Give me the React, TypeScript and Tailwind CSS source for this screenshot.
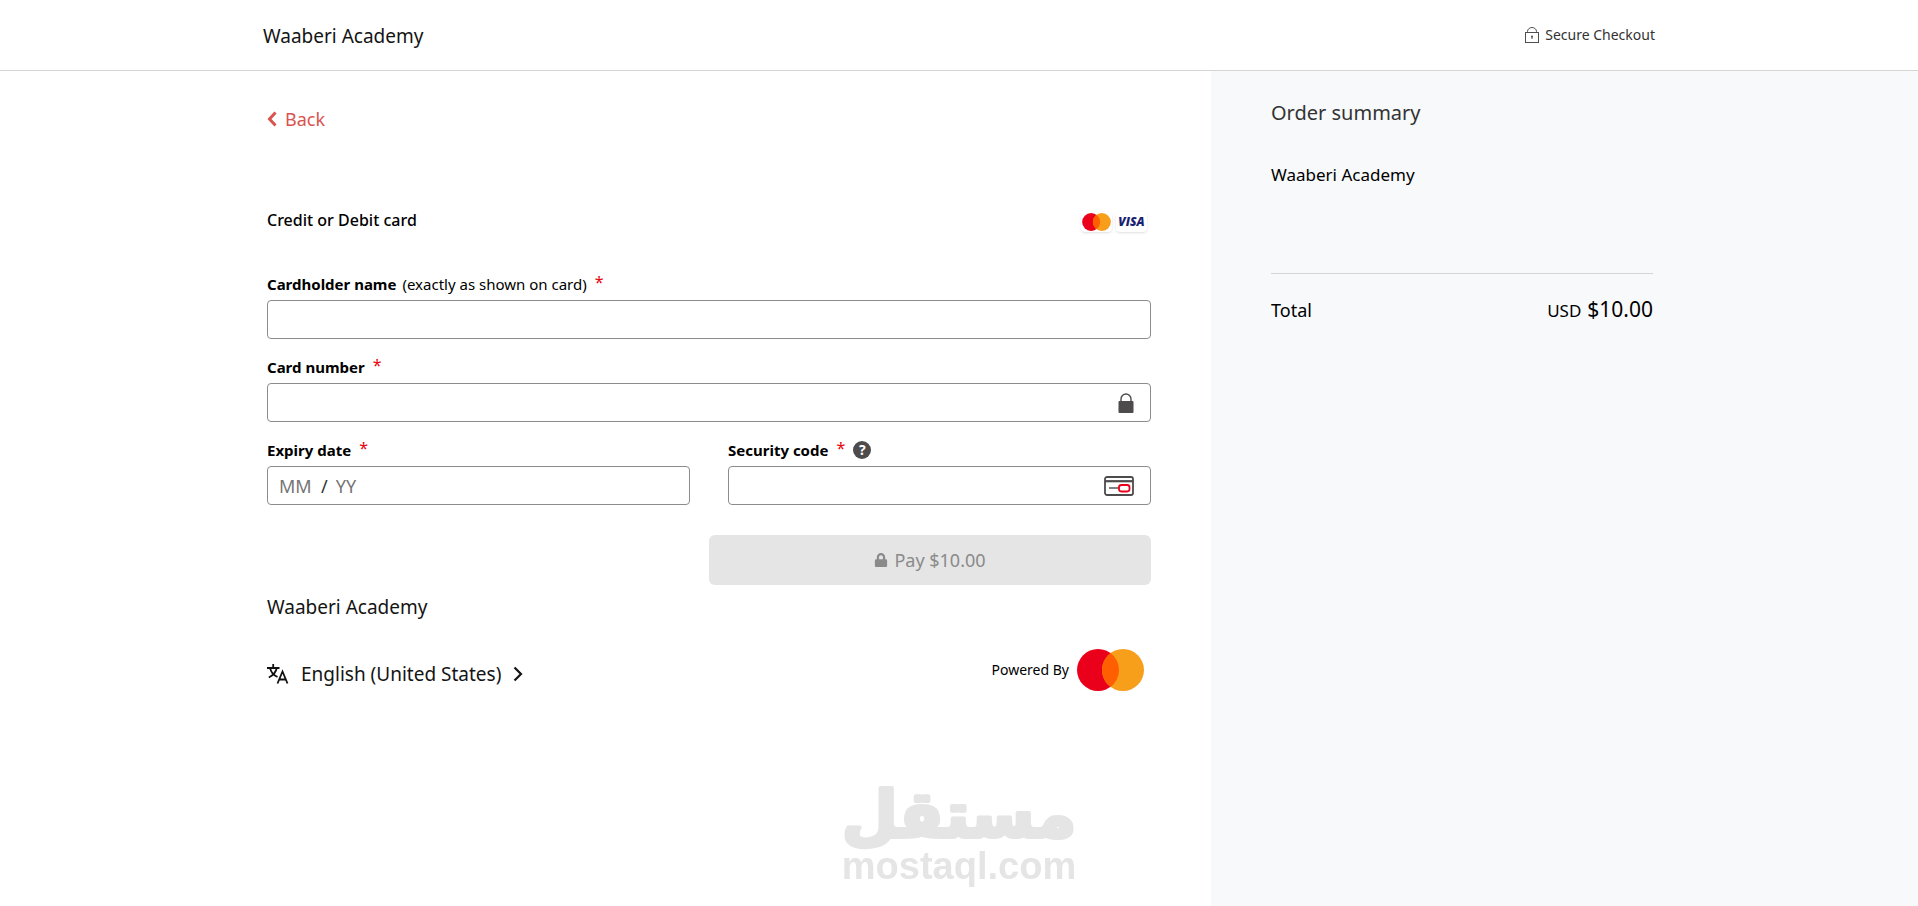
import React from 'react';
import { FaLock } from 'react-icons/fa';

interface FieldLabelProps {
  htmlFor: string;
  text: string;
  hint?: string;
}

const FieldLabel: React.FC<FieldLabelProps> = ({ htmlFor, text, hint }) => (
  <label htmlFor={htmlFor} className="flex h-7 items-center text-[15px] text-black">
    <span className="font-bold">{text}</span>
    {hint && <span className="ml-1.5">{hint}</span>}
    <span className="ml-2 self-start text-base text-red-600">*</span>
  </label>
);

const CardBrandCircles: React.FC<{ className: string }> = ({ className }) => (
  <svg viewBox="0 0 67 42" className={className} aria-hidden="true">
    <circle cx="21" cy="21" r="21" fill="#eb001b" />
    <circle cx="46" cy="21" r="21" fill="#f79e1b" />
    <path d="M33.5 4.1a21 21 0 0 1 0 33.8 21 21 0 0 1 0-33.8z" fill="#ff5f00" />
  </svg>
);

const SecureLockIcon = () => (
  <svg viewBox="0 0 14 16" className="h-4 w-3.5" fill="none" stroke="#4f4f4f" aria-hidden="true">
    <rect x="0.5" y="5.5" width="13" height="10" />
    <path d="M2.5 5.5V4.5a4.5 4 0 0 1 9 0v1" />
    <path d="M7 9v3" />
    <circle cx="7" cy="9.5" r="1" fill="#4f4f4f" stroke="none" />
  </svg>
);

const FieldLockIcon = () => (
  <svg viewBox="0 0 16 20" className="h-5 w-4" aria-hidden="true">
    <path d="M3 9V6a5 5 0 0 1 10 0v3" fill="none" stroke="#4d4b4b" strokeWidth="1.4" />
    <rect x="0.5" y="8" width="15" height="12" rx="1" fill="#4d4b4b" />
  </svg>
);

const CvvIcon = () => (
  <svg viewBox="0 0 30 20" className="h-5 w-[30px]" fill="none" aria-hidden="true">
    <rect x="1" y="1" width="28" height="18" rx="2" stroke="#4d4b4b" strokeWidth="1.8" />
    <path d="M1 5.2h28" stroke="#4d4b4b" strokeWidth="2.2" />
    <path d="M5 12h10" stroke="#4d4b4b" strokeWidth="1.4" />
    <rect x="15" y="9" width="10.5" height="6.5" rx="2.4" stroke="#eb001b" strokeWidth="1.8" />
  </svg>
);

const TranslateIcon = () => (
  <svg viewBox="0 0 22 20" className="h-5 w-[22px]" fill="none" stroke="#111" strokeWidth="1.8" aria-hidden="true">
    <path d="M0 4h12.5M6.2 0V4M3 4c1 4 4 7.5 7.5 9M9.700 4C9 8 6 11.5 1.800 13.5" />
    <path d="M10.5 19.5 15.5 7.500l5 12M12.2 15.5h7" />
  </svg>
);

const ChevronLeft = () => (
  <svg viewBox="0 0 10 16" className="h-4 w-2.5" fill="none" stroke="currentColor" strokeWidth="3" aria-hidden="true">
    <path d="M8.500 1.500 2.500 8l6 6.500" />
  </svg>
);

const ChevronRight = () => (
  <svg viewBox="0 0 10 16" className="h-4 w-2.5" fill="none" stroke="currentColor" strokeWidth="2.2" aria-hidden="true">
    <path d="M1.5 1.5 8 8l-6.5 6.5" />
  </svg>
);

const inputClass =
  'h-[39px] w-full rounded border border-[#8c8c8c] bg-white px-3 text-lg text-black outline-none focus:border-black';

const Header = () => (
  <header className="border-b border-[#d5d5d5] bg-white">
    <div className="mx-auto flex h-[70px] max-w-[1392px] items-center justify-between">
      <span className="pt-0.5 text-[19px] text-[#141413]">Waaberi Academy</span>
      <span className="flex items-center gap-1.5 text-sm text-[#333]">
        <SecureLockIcon />
        Secure Checkout
      </span>
    </div>
  </header>
);

const PaymentForm = () => (
  <form onSubmit={(e) => e.preventDefault()}>
    <div className="flex h-[50px] items-center justify-between">
      <h2 className="text-base font-medium text-black">Credit or Debit card</h2>
      <div className="flex items-center gap-1 pt-1 pr-1">
        <span className="flex h-5 w-[31px] items-center justify-center rounded-sm bg-white shadow-sm">
          <CardBrandCircles className="h-[18px] w-[29px]" />
        </span>
        <span className="flex h-5 w-[31px] items-center justify-center rounded-sm bg-white font-['Open_Sans',sans-serif] text-xs font-extrabold text-[#1a1f71] italic shadow-sm">
          VISA
        </span>
      </div>
    </div>

    <div className="mt-[25px]">
      <FieldLabel htmlFor="cardholder" text="Cardholder name" hint="(exactly as shown on card)" />
      <input id="cardholder" type="text" className={`mt-0.5 ${inputClass}`} />
    </div>

    <div className="mt-3.5">
      <FieldLabel htmlFor="card-number" text="Card number" />
      <div className="relative mt-0.5">
        <input id="card-number" type="text" inputMode="numeric" className={inputClass} />
        <span className="absolute inset-y-0 right-[17px] flex items-center">
          <FieldLockIcon />
        </span>
      </div>
    </div>

    <div className="mt-3.5 grid grid-cols-2 gap-[38px]">
      <div>
        <FieldLabel htmlFor="expiry-month" text="Expiry date" />
        <div className="mt-0.5 flex h-[39px] items-center rounded border border-[#8c8c8c] px-[11px] text-lg">
          <input
            id="expiry-month"
            type="text"
            placeholder="MM"
            className="w-[42px] outline-none placeholder:text-[#757575]"
          />
          <span className="text-[#333]">/</span>
          <input
            type="text"
            aria-label="Expiry year"
            placeholder="YY"
            className="ml-2 w-10 outline-none placeholder:text-[#757575]"
          />
        </div>
      </div>
      <div>
        <div className="flex items-center gap-2">
          <FieldLabel htmlFor="security-code" text="Security code" />
          <button
            type="button"
            aria-label="Security code help"
            className="flex size-[18px] items-center justify-center rounded-full bg-[#4d4b4b] text-sm font-bold text-white"
          >
            ?
          </button>
        </div>
        <div className="relative mt-0.5">
          <input id="security-code" type="text" inputMode="numeric" className={inputClass} />
          <span className="absolute inset-y-0 right-[17px] flex items-center">
            <CvvIcon />
          </span>
        </div>
      </div>
    </div>

    <div className="mt-[30px] flex justify-end">
      <button
        type="submit"
        disabled
        className="flex h-[50px] w-1/2 items-center justify-center gap-1.5 rounded-md bg-[#e5e5e5] text-lg text-[#8a8a8a]"
      >
        <FaLock className="size-3.5" />
        Pay $10.00
      </button>
    </div>
  </form>
);

const OrderSummary = () => (
  <aside className="bg-[#f8f9fb] px-[60px] pt-[22px]">
    <div className="max-w-[382px]">
      <h2 className="text-xl leading-10 text-[#333]">Order summary</h2>
      <p className="mt-7 text-[17px] leading-7 text-black">Waaberi Academy</p>
      <div className="mt-[84px] flex items-center justify-between border-t border-[#d5d5d5] pt-5 text-black">
        <span className="text-lg">Total</span>
        <span className="flex items-baseline gap-1.5">
          <span className="text-[17px]">USD</span>
          <span className="text-[21px]">$10.00</span>
        </span>
      </div>
    </div>
  </aside>
);

const Watermark = () => (
  <svg
    viewBox="0 0 240 120"
    className="pointer-events-none fixed bottom-3.5 left-1/2 h-[120px] w-60 -translate-x-1/2 overflow-visible"
    fill="#e5e5e5"
    role="img"
    aria-label="mostaql.com"
  >
    <text
      x="120"
      y="65"
      textAnchor="middle"
      direction="rtl"
      stroke="#e5e5e5"
      strokeWidth="4"
      strokeLinejoin="round"
      className="font-['DejaVu_Sans',sans-serif] text-[64px] font-bold"
    >
      مستقل
    </text>
    <text
      x="120"
      y="107"
      textAnchor="middle"
      className="font-['Liberation_Sans',Arial,sans-serif] text-[38px] font-bold"
    >
      mostaql.com
    </text>
  </svg>
);

export default function App() {
  return (
    <div className="flex min-h-screen flex-col bg-white font-['Noto_Sans','Open_Sans',sans-serif]">
      <Header />
      <div className="grid flex-1 grid-cols-[calc(50%+252px)_1fr]">
        <main className="flex justify-end pr-[60px] pl-4">
          <div className="w-full max-w-[884px] pt-[33px]">
            <a href="#" className="flex w-fit items-center gap-2 text-lg leading-[30px] text-[#d9534f]">
              <ChevronLeft />
              Back
            </a>
            <div className="mt-[61px]">
              <PaymentForm />
            </div>
            <footer className="mt-2">
              <p className="text-[19px] leading-7 text-[#141413]">Waaberi Academy</p>
              <div className="mt-7 flex items-center justify-between">
                <button type="button" className="flex items-center gap-3 pt-2 text-[19px] text-[#141413]">
                  <TranslateIcon />
                  English (United States)
                  <ChevronRight />
                </button>
                <div className="flex items-center gap-2 pr-[7px] text-sm text-black">
                  Powered By
                  <CardBrandCircles className="h-[42px] w-[67px]" />
                </div>
              </div>
            </footer>
          </div>
        </main>
        <OrderSummary />
      </div>
      <Watermark />
    </div>
  );
}
